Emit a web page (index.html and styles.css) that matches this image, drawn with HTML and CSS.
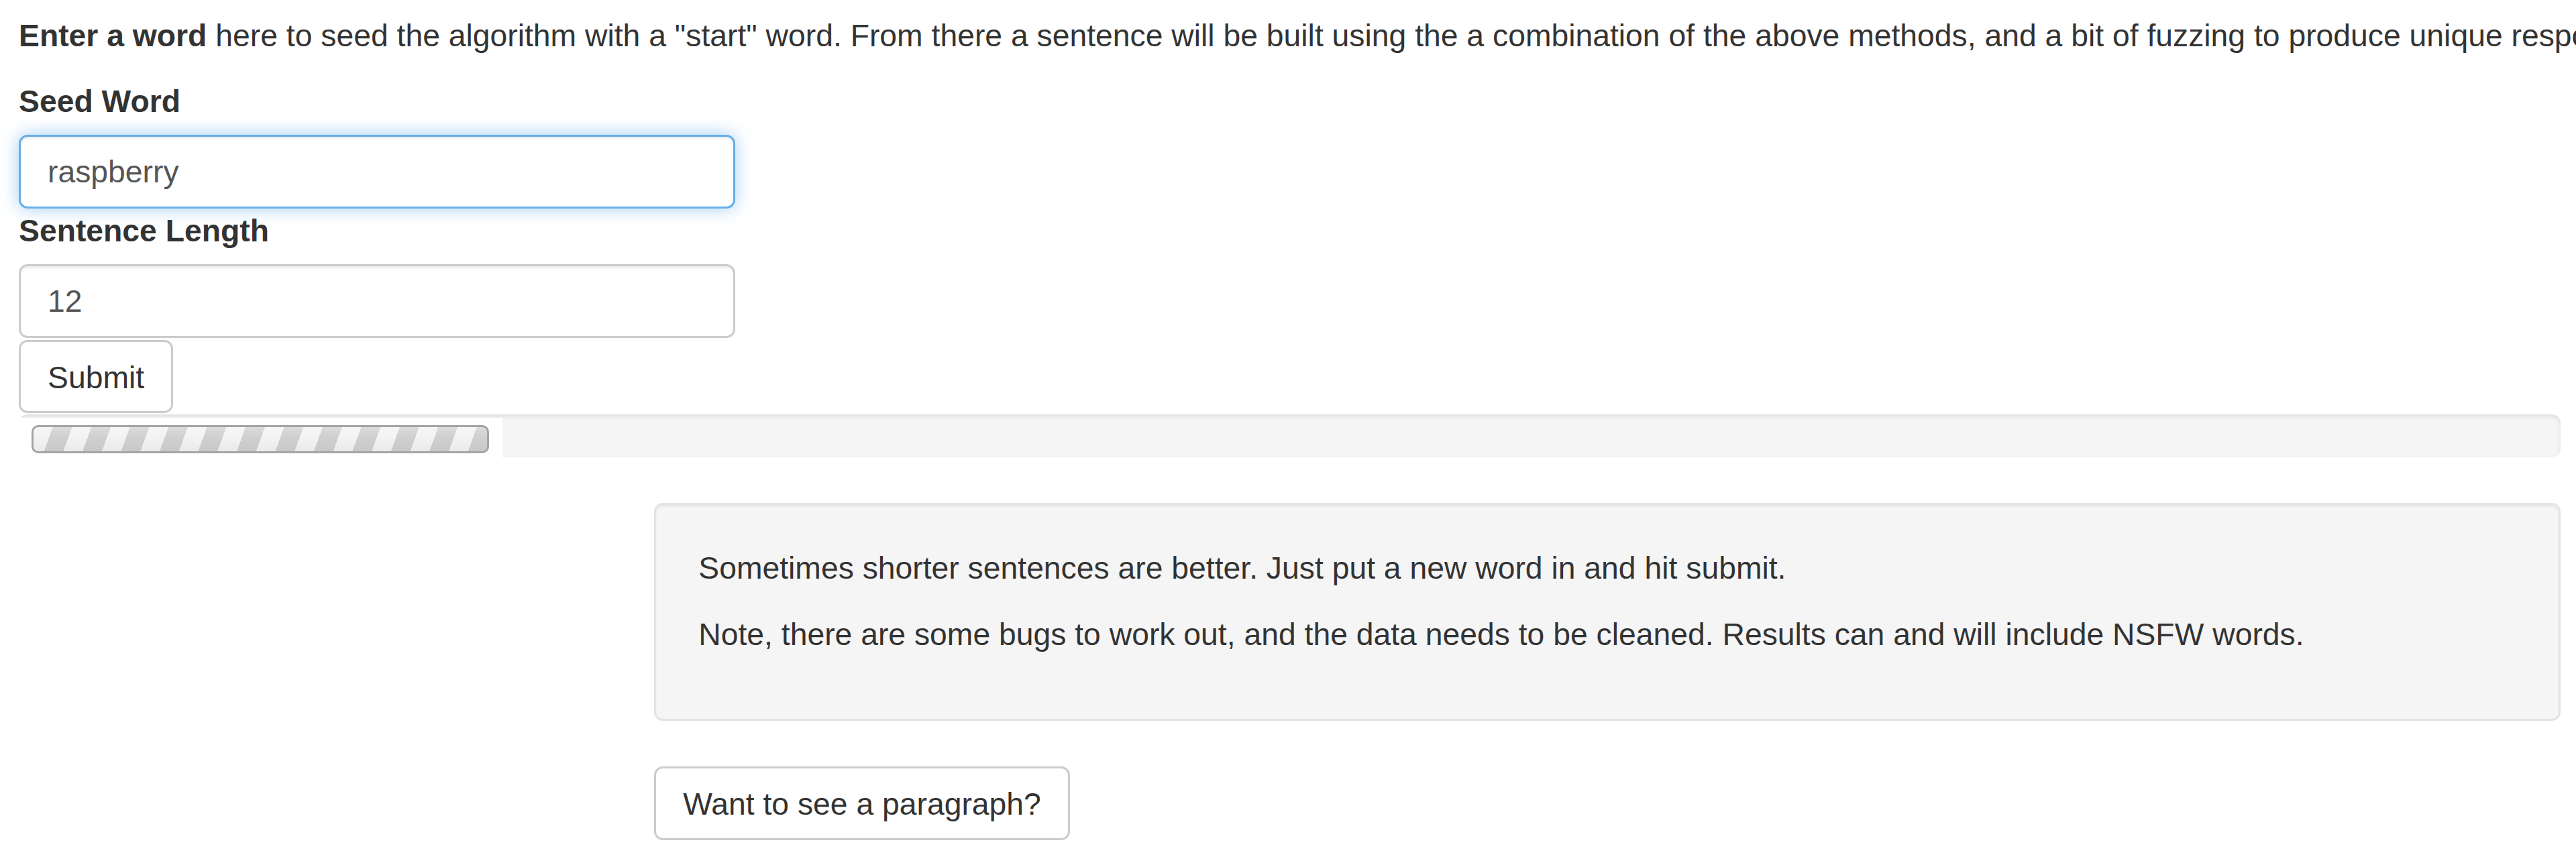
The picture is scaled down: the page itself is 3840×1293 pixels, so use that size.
FILE: index.html
```html
<!DOCTYPE html>
<html lang="en">
<head>
<meta charset="utf-8">
<title>Sentence Generator</title>
<link rel="stylesheet" href="styles.css">
</head>
<body>
<div class="page">
  <p class="intro"><strong>Enter a word</strong> here to seed the algorithm with a "start" word. From there a sentence will be built using the a combination of the above methods, and a bit of fuzzing to produce unique responses.</p>
  <div class="field">
    <label class="label" for="seed">Seed Word</label>
    <input class="input input-focus" id="seed" type="text" value="raspberry">
  </div>
  <div class="field">
    <label class="label" for="len">Sentence Length</label>
    <input class="input" id="len" type="text" value="12">
  </div>
  <button class="btn btn-submit" type="button">Submit</button>
  <div class="progress">
    <div class="progress-track">
      <div class="progress-stripes"></div>
    </div>
  </div>
  <div class="output">
    <div class="well">
      <p class="well-text">Sometimes shorter sentences are better. Just put a new word in and hit submit.</p>
      <p class="well-text">Note, there are some bugs to work out, and the data needs to be cleaned. Results can and will include NSFW words.</p>
    </div>
    <button class="btn" type="button">Want to see a paragraph?</button>
  </div>
</div>
</body>
</html>
```
FILE: styles.css
```css
html, body {
  margin: 0;
  padding: 0;
  overflow: hidden;
  background: #ffffff;
}

body {
  font-family: "Liberation Sans", Arial, Helvetica, sans-serif;
  font-size: 46.3px;
  line-height: 66px;
  color: #333333;
}

.page {
  padding: 20px 23px 0 28px;
}

.intro {
  margin: 0 0 32px 0;
  white-space: nowrap;
}

.intro strong {
  font-weight: bold;
}

.field {
  display: flex;
  flex-direction: column;
  align-items: flex-start;
}

.label {
  display: block;
  font-weight: bold;
  margin-bottom: 17px;
}

.input {
  display: block;
  box-sizing: border-box;
  width: 1068px;
  height: 110px;
  margin: 0;
  padding: 20px 40px;
  font: inherit;
  line-height: 66px;
  color: #555555;
  background: #ffffff;
  border: 3px solid #cccccc;
  border-radius: 13px;
  box-shadow: inset 0 3px 3px rgba(0, 0, 0, 0.075);
  outline: none;
}

.input-focus {
  border-color: #66afe9;
  box-shadow: inset 0 3px 3px rgba(0, 0, 0, 0.075), 0 0 26px rgba(102, 175, 233, 0.6);
}

.btn {
  display: block;
  box-sizing: border-box;
  height: 110px;
  margin: 0;
  padding: 20px 40px;
  font: inherit;
  line-height: 66px;
  color: #333333;
  background: #ffffff;
  border: 3px solid #cccccc;
  border-radius: 13px;
  cursor: pointer;
}

.btn-submit {
  height: 109px;
  margin-top: 3px;
}

.progress {
  display: flex;
  align-items: flex-end;
  height: 64px;
  margin-top: 2px;
  background: #f5f5f5;
  border-radius: 13px;
  box-shadow: inset 0 3px 6px rgba(0, 0, 0, 0.1);
  overflow: hidden;
}

.progress-track {
  box-sizing: border-box;
  width: 721px;
  height: 59px;
  padding: 11px 20px 6px 19px;
  background: #ffffff;
  border-radius: 0 0 0 13px;
}

.progress-stripes {
  box-sizing: border-box;
  height: 42px;
  border: 3px solid #a4a4a4;
  border-radius: 10px;
  background:
    linear-gradient(to bottom, rgba(255, 255, 255, 0.25), rgba(255, 255, 255, 0) 40%, rgba(0, 0, 0, 0.04)),
    repeating-linear-gradient(110deg, #f3f3f3 0 27px, #d0d0d0 27px 54px);
}

.output {
  margin-left: 25%;
  margin-top: 68px;
}

.well {
  box-sizing: border-box;
  padding: 61px 63px 60px 63px;
  margin-bottom: 68px;
  background: #f5f5f5;
  border: 3px solid #e3e3e3;
  border-radius: 13px;
  box-shadow: inset 0 3px 3px rgba(0, 0, 0, 0.05);
}

.well-text {
  margin: 0 0 33px 0;
}
```
